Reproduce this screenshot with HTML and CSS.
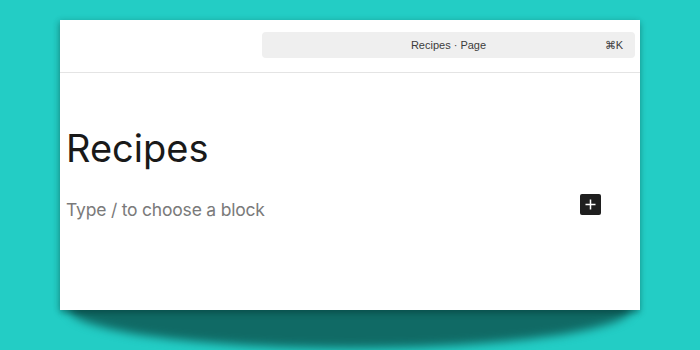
FILE: index.html
```html
<!DOCTYPE html>
<html lang="en">
<head>
<meta charset="utf-8">
<title>Recipes</title>
<link rel="stylesheet" href="styles.css">
</head>
<body>
<div class="stage">
  <div class="window">
    <header class="topbar">
      <div class="command">
        <span class="command-title">Recipes · Page</span>
        <span class="command-key">⌘K</span>
      </div>
    </header>
    <main class="editor">
      <h1 class="page-title">Recipes</h1>
      <div class="block-row">
        <p class="placeholder">Type / to choose a block</p>
        <button class="add-block" aria-label="Add block">
          <svg width="11" height="11" viewBox="0 0 11 11"><path d="M5.5 0.5v10M0.5 5.5h10" stroke="#fff" stroke-width="1.5" fill="none"/></svg>
        </button>
      </div>
    </main>
  </div>
</div>
</body>
</html>
```

FILE: styles.css
```css
html, body {
  margin: 0;
  padding: 0;
}
body {
  background: #23cdc5;
  width: 700px;
  height: 350px;
  overflow: hidden;
  font-family: Inter, "Noto Sans", sans-serif;
}
.stage {
  padding: 20px 60px 0 60px;
}
.window {
  position: relative;
  width: 580px;
  height: 290px;
  background: #fff;
  box-shadow: 0 3px 6px rgba(0, 40, 38, 0.35), -2px 0 6px rgba(0, 60, 56, 0.12);
}
.window::after {
  content: "";
  position: absolute;
  left: 8px;
  right: 8px;
  top: 248px;
  height: 80px;
  border-radius: 50%;
  background: #106a65;
  filter: blur(5px);
  z-index: -1;
}
.topbar {
  height: 53px;
  box-sizing: border-box;
  padding: 12px 5px 0 202px;
  border-bottom: 1px solid #e4e4e4;
}
.command {
  height: 26px;
  background: #efefef;
  border-radius: 4px;
  display: flex;
  align-items: center;
  justify-content: center;
  position: relative;
  font-family: "Liberation Sans", Arial, sans-serif;
  font-size: 11px;
  color: #3c3c3c;
}
.command-key {
  position: absolute;
  right: 12px;
  top: 7px;
}
.editor {
  padding: 55px 39px 0 6px;
}
.page-title {
  margin: 0;
  font-size: 38px;
  line-height: 40px;
  font-weight: 400;
  color: #191919;
  letter-spacing: 0;
}
.block-row {
  margin-top: 30px;
  display: flex;
  justify-content: space-between;
  align-items: flex-start;
}
.placeholder {
  margin: 0;
  font-size: 17.5px;
  line-height: 24px;
  color: #7a7a7a;
  letter-spacing: -0.2px;
}
.add-block {
  margin-top: -4px;
  width: 21px;
  height: 21px;
  padding: 0;
  border: 0;
  border-radius: 2px;
  background: #1e1e1e;
  display: flex;
  align-items: center;
  justify-content: center;
}
```
